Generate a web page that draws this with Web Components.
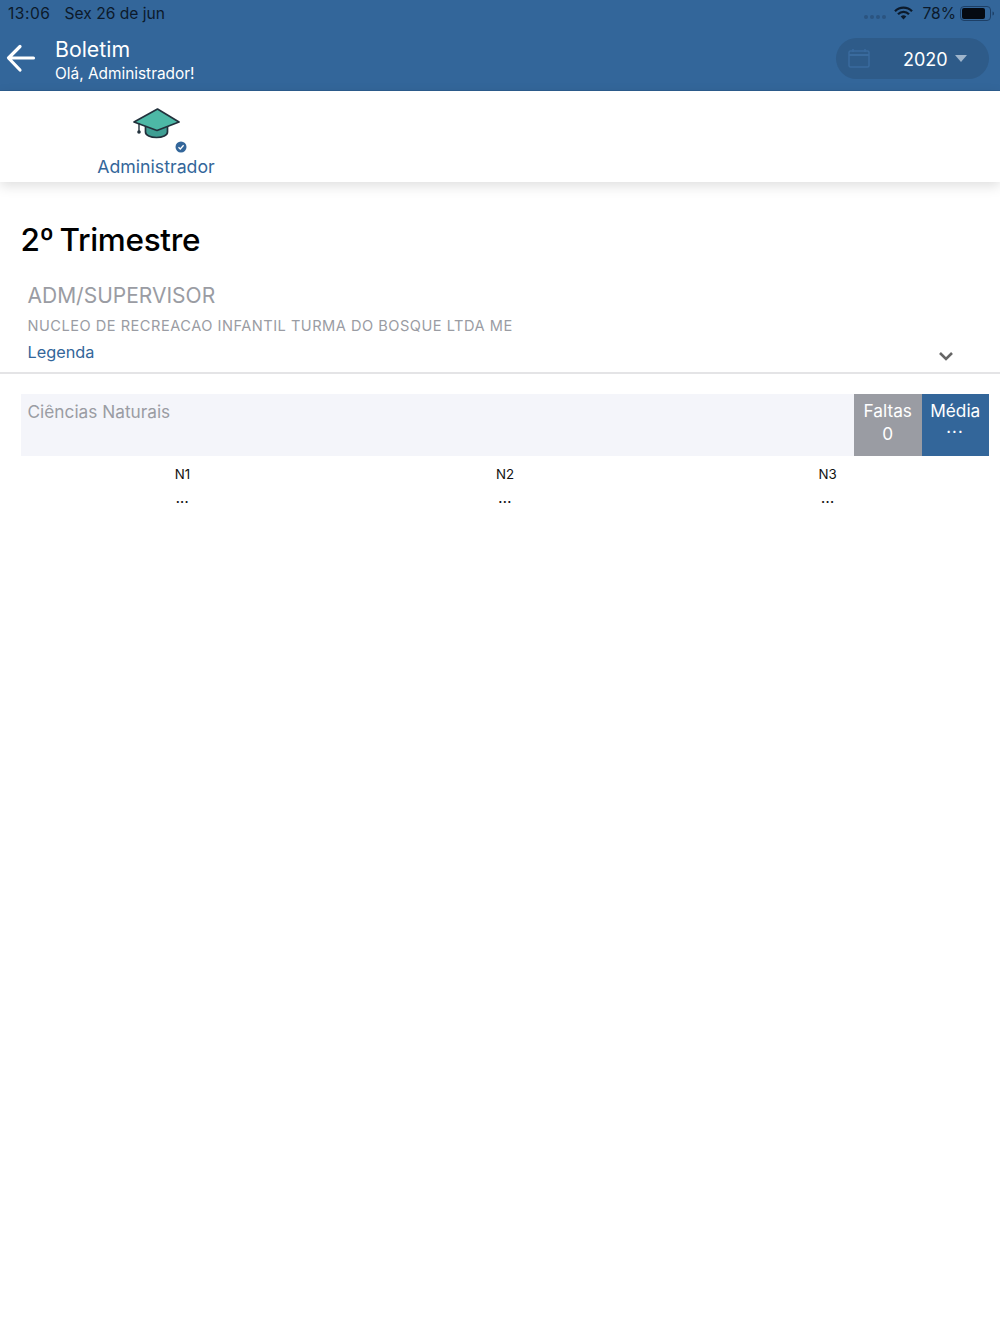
<!DOCTYPE html>
<html lang="pt"><head><meta charset="utf-8"><title>Boletim</title>
<style>
html,body{margin:0;padding:0;background:#fff;font-family:Inter,"Noto Sans",sans-serif}
body{width:1000px;height:1334px;overflow:hidden}
</style></head><body>
<app-header></app-header>
<profile-tab></profile-tab>
<term-info></term-info>
<grade-card></grade-card>
<script>
function def(name,html){customElements.define(name,class extends HTMLElement{constructor(){super();this.attachShadow({mode:'open'}).innerHTML=html}})}
def('status-bar',`<style>
:host{display:flex;align-items:center;height:28px;padding:0 5px 2px 8px;font-size:15.600px;color:#0c1a2b;box-sizing:border-box}
.t{letter-spacing:.5px}.d{margin-left:14px}.s{flex:1}
.dots{display:flex;gap:2px;margin-right:8px;margin-top:7px}.dots i{width:4px;height:4px;border-radius:50%;background:#2b5480}
svg{display:block}.p{margin:0 4px 0 9px}
</style><span class="t">13:06</span><span class="d">Sex 26 de jun</span><span class="s"></span>
<span class="dots"><i></i><i></i><i></i><i></i></span>
<svg width="19" height="14" viewBox="0 0 19 14"><g fill="none" stroke="#0c1a2b" stroke-width="2.300"><path d="M1 5.200a12 12 0 0 1 17 0"/><path d="M4 8.200a7.800 7.800 0 0 1 11 0"/></g><path d="M6.700 10.600a4 4 0 0 1 5.600 0L9.500 13.600z" fill="#0c1a2b"/></svg>
<span class="p">78%</span>
<svg width="35" height="15" viewBox="0 0 35 15"><rect x=".5" y=".5" width="30" height="14" rx="3.500" fill="none" stroke="#1d3f66"/><rect x="2" y="2" width="23" height="11" rx="2" fill="#050a12"/><path d="M32.500 5.500v4c1-.3 1.500-1 1.500-2s-.5-1.700-1.500-2z" fill="#1d3f66"/></svg>`);
def('year-pill',`<style>
:host{display:flex;align-items:center;width:153px;height:41px;border-radius:21px;background:#2e5b89;color:#fff;font-size:18px;box-sizing:border-box;padding-left:12px;margin-top:-3px}
svg{display:block}.y{margin:2px 0 0 33px}.c{width:0;height:0;border:6px solid transparent;border-top:7px solid #9fb5cc;border-bottom:0;margin-left:7px;margin-top:0}
</style><svg width="22" height="20" viewBox="0 0 22 20" fill="none" stroke="#3a6b9e" stroke-width="1.500"><rect x="1" y="3" width="20" height="16" rx="1.500"/><path d="M1 7h20" stroke-width="2"/><path d="M5 1v3M17 1v3"/></svg><span class="y">2020</span><span class="c"></span>`);
def('app-header',`<style>
:host{display:block;background:#33669a;color:#fff;height:91px;box-shadow:inset 0 -1px #2d5d8e}
.row{display:flex;align-items:center;height:63px;padding:0 11px 0 6px}
.b{width:49px;display:block;flex:none}.t{flex:1;padding-top:2px}
h1{margin:0;font-size:21.300px;font-weight:400;line-height:25px}
p{margin:2px 0 0;font-size:15.400px;line-height:20px}
.back{display:block;margin-top:-4px}
</style><status-bar></status-bar><div class="row">
<div class="b"><svg class="back" width="30" height="30" viewBox="0 0 30 30" fill="none" stroke="#fff" stroke-width="3.200" stroke-linecap="round" stroke-linejoin="round"><path d="M27.500 15H3M14 3.500 2.500 15 14 27"/></svg></div>
<div class="t"><h1>Boletim</h1><p>Olá, Administrador!</p></div><year-pill></year-pill></div>`);
def('profile-tab',`<style>
:host{display:block;height:91px;background:#fff;box-shadow:0 4px 12px rgba(0,0,0,.13);position:relative}
.i{width:312px;display:flex;flex-direction:column;align-items:center;padding-top:17px;box-sizing:border-box}
.ic{position:relative;width:48px;height:48px}
.ic svg{display:block}
.ok{position:absolute;left:43px;top:33px}
span{display:block;font-size:17.700px;line-height:22px;color:#33669a}
</style><div class="i"><div class="ic"><svg width="48" height="32" viewBox="0 0 48 32" stroke="#22313c" stroke-width="1.700" stroke-linejoin="round"><path d="M13.500 16v8c0 3.500 5 5.500 11 5.500s11-2 11-5.500v-8z" fill="#3f9e93"/><path d="M25.500 1 47 14 25 22.500 2 14z" fill="#4db8a6"/><path d="M7 15v8" fill="none" stroke-width="1.400"/><circle cx="7" cy="24" r="1.800" fill="#22313c" stroke="none"/></svg>
<svg class="ok" width="12" height="12" viewBox="0 0 12 12"><circle cx="6" cy="6" r="5.500" fill="#33669a"/><path d="M3.500 6.200 5.300 8 8.600 4.300" fill="none" stroke="#fff" stroke-width="1.300"/></svg></div><span>Administrador</span></div>`);
def('term-info',`<style>
:host{display:block;height:192px;box-sizing:border-box;padding-top:38px;border-bottom:2px solid #e4e4e6;position:relative}
h2{margin:0 0 0 20.500px;font-size:31.500px;line-height:40px;font-weight:500;color:#000;letter-spacing:-.3px;word-spacing:-2.500px}
.b{padding:20px 0 0 27.500px}
.a{font-size:21px;line-height:30px;color:#9a9ca3;padding-top:1px}
.n{font-size:14.600px;letter-spacing:.5px;line-height:20px;color:#9a9ca3;margin-top:5px}
.l{font-size:16.300px;line-height:24px;color:#33669a;margin-top:4px}
svg{position:absolute;left:938px;top:169px;display:block}
</style><h2>2º Trimestre</h2><div class="b"><div class="a">ADM/SUPERVISOR</div><div class="n">NUCLEO DE RECREACAO INFANTIL TURMA DO BOSQUE LTDA ME</div><div class="l">Legenda</div></div>
<svg width="16" height="11" viewBox="0 0 16 11" fill="none" stroke="#666" stroke-width="2.600"><path d="M2 2l6 6 6-6"/></svg>`);
def('grade-card',`<style>
:host{display:block;padding:20px 11px 0 21px}
.h{display:flex;height:62px}
.m{flex:1;background:#f4f5fa;color:#9a9ca3;padding:6px 6.500px;font-size:17.250px;line-height:24px;box-sizing:border-box}
.c{width:67.500px;text-align:center;color:#fff;font-size:17.250px;line-height:22px;padding-top:6px;box-sizing:border-box}
.f{background:#9a9ca3}.md{background:#33669a}.c b{font-weight:400;display:block}
.f b{margin-top:1px}
.md b{font-weight:800;letter-spacing:1.600px;line-height:10px;font-size:12px;margin-top:2px}
.g{display:grid;grid-template-columns:repeat(3,322.700px);margin-top:8px;text-align:center;font-size:13.300px;line-height:20px;color:#111}
.v{font-size:13px;font-weight:600;letter-spacing:.3px;margin-top:4px;line-height:20px}
</style><div class="h"><div class="m">Ciências Naturais</div><div class="c f">Faltas<b>0</b></div><div class="c md">Média<b>...</b></div></div>
<div class="g"><div>N1<div class="v">...</div></div><div>N2<div class="v">...</div></div><div>N3<div class="v">...</div></div></div>`);
</script></body></html>
